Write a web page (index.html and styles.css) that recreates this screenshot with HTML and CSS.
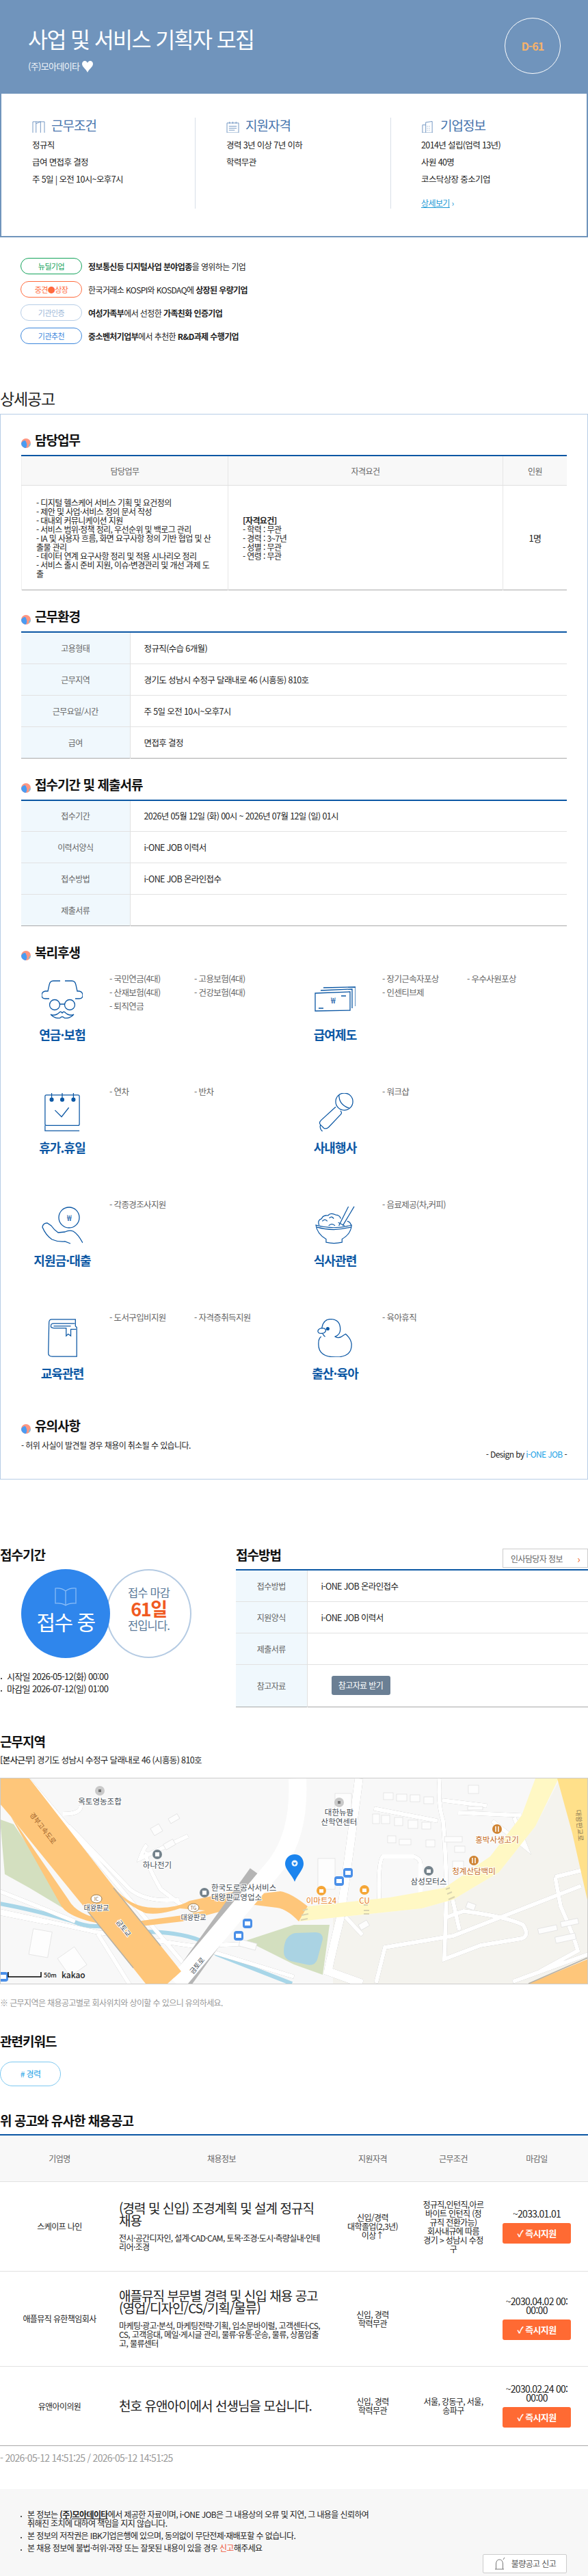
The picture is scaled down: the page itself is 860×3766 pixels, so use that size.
FILE: index.html
```html
<!DOCTYPE html>
<html lang="ko">
  <head>
    <meta charset="UTF-8" />
    <meta name="viewport" content="width=device-width, initial-scale=1.0" />
    <title>사업 및 서비스 기획자 모집</title>
    <link rel="stylesheet" href="styles.css">
  </head>
  <body>
    <svg class="defs" width="0" height="0">
      <symbol id="dot" viewBox="0 0 14 14">
        <circle cx="7" cy="7" r="7" fill="#ff9682" />
        <path d="M0,7 A7,7 0 0 0 7,14 Q10,9 6,3 Q2,3 0,7 Z" fill="#4a9cf2" />
        <path d="M11,12.5 A7,7 0 0 0 14,7 Q11,8 11,12.5 Z" fill="#63cdf0" />
      </symbol>
    </svg>

    <div class="head">
      <div>
        <h1>사업 및 서비스 기획자 모집</h1>
        <p class="company">(주)모아데이타 <svg class="heart" width="16" height="17" viewBox="0 0 16 17"><path d="M8,17 C6,12 0,9 0,4.500 C0,1.500 2,0 4,0 C6,0 7.500,1.500 8,3 C8.500,1.500 10,0 12,0 C14,0 16,1.500 16,4.500 C16,9 10,12 8,17 Z" /></svg></p>
      </div>
      <div class="dday">D-61</div>
    </div>

    <div class="summary">
      <div class="sum-col">
        <h3>
          <svg class="sum-icon" viewBox="0 0 20 18"><path d="M1,18 V1 H19 V18 M6,18 V1 M13,1 V18 M13,1 L6,4" /></svg>
          근무조건
        </h3>
        <p>정규직</p>
        <p>급여 면접후 결정</p>
        <p>주 5일 | 오전 10시~오후7시</p>
      </div>
      <div class="sum-col">
        <h3>
          <svg class="sum-icon" viewBox="0 0 20 18"><path d="M1,18 V3 H19 V18 M1,18 H19 M5,1 V4 M10,1 V4 M15,1 V4 M4,8 H16 M4,11 H16 M4,14 H13" /></svg>
          지원자격
        </h3>
        <p>경력 3년 이상 7년 이하</p>
        <p>학력무관</p>
      </div>
      <div class="sum-col last">
        <h3>
          <svg class="sum-icon" viewBox="0 0 20 18"><path d="M2,18 V6 H7 M7,18 V2 L17,0.5 V18 M1,18 H18 M9,8 H10 M12,8 H13 M9,11 H10 M12,11 H13 M9,14 H10 M12,14 H13" /></svg>
          기업정보
        </h3>
        <p>2014년 설립(업력 13년)</p>
        <p>사원 40명</p>
        <p>코스닥상장 중소기업</p>
        <p class="more"><a href="#">상세보기</a> <span>›</span></p>
      </div>
    </div>

    <ul class="badges">
      <li><span class="badge green">뉴딜기업</span><span><b>정보통신등 디지털사업 분야업종</b>을 영위하는 기업</span></li>
      <li><span class="badge orange">중견●상장</span><span>한국거래소 KOSPI와 KOSDAQ에 <b>상장된 우량기업</b></span></li>
      <li><span class="badge pale">기관인증</span><span><b>여성가족부</b>에서 선정한 <b>가족친화 인증기업</b></span></li>
      <li><span class="badge blue">기관추천</span><span><b>중소벤처기업부</b>에서 추천한 <b>R&amp;D과제 수행기업</b></span></li>
    </ul>

    <h2 class="detail-title">상세공고</h2>
    <div class="detail">
      <h4 class="sec"><svg class="sec-dot"><use href="#dot" /></svg>담당업무</h4>
      <table class="duty">
        <tr><th class="c1">담당업무</th><th class="c2">자격요건</th><th>인원</th></tr>
        <tr>
          <td class="text">- 디지털 헬스케어 서비스 기획 및 요건정의<br>- 제안 및 사업·서비스 정의 문서 작성<br>- 대내외 커뮤니케이션 지원<br>- 서비스 범위·정책 정리, 우선순위 및 백로그 관리<br>- IA 및 사용자 흐름, 화면 요구사항 정의 기반 협업 및 산출물 관리<br>- 데이터 연계 요구사항 정리 및 적용 시나리오 정리<br>- 서비스 출시 준비 지원, 이슈·변경관리 및 개선 과제 도출</td>
          <td class="text"><b>[자격요건]</b><br>- 학력 : 무관<br>- 경력 : 3~7년<br>- 성별 : 무관<br>- 연령 : 무관</td>
          <td class="center">1명</td>
        </tr>
      </table>

      <h4 class="sec"><svg class="sec-dot"><use href="#dot" /></svg>근무환경</h4>
      <table class="info">
        <tr><th>고용형태</th><td>정규직(수습 6개월)</td></tr>
        <tr><th>근무지역</th><td>경기도 성남시 수정구 달래내로 46 (시흥동) 810호</td></tr>
        <tr><th>근무요일/시간</th><td>주 5일 오전 10시~오후7시</td></tr>
        <tr><th>급여</th><td>면접후 결정</td></tr>
      </table>

      <h4 class="sec"><svg class="sec-dot"><use href="#dot" /></svg>접수기간 및 제출서류</h4>
      <table class="info">
        <tr><th>접수기간</th><td>2026년 05월 12일 (화) 00시 ~ 2026년 07월 12일 (일) 01시</td></tr>
        <tr><th>이력서양식</th><td>i-ONE JOB 이력서</td></tr>
        <tr><th>접수방법</th><td>i-ONE JOB 온라인접수</td></tr>
        <tr><th>제출서류</th><td></td></tr>
      </table>

      <h4 class="sec"><svg class="sec-dot"><use href="#dot" /></svg>복리후생</h4>
      <div class="welfare">
        <div class="wf">
          <div class="wf-side">
            <svg class="wf-icon" width="60" height="56" viewBox="0 0 60 56"><path d="M27,1 H17 Q12,1 11,7 L9,16 H5 Q0,17 0,22 Q0,27 5,27 H11 M34,1 H44 Q49,1 50,7 L52,16 H55 Q60,17 60,22 Q60,27 55,27 H49" /><circle cx="19" cy="36" r="7.5" /><circle cx="41" cy="36" r="7.5" /><path d="M26.5,35 H33.5 M13,50 Q20,53 26,47 Q28,45 30,48 Q32,45 34,47 Q40,53 47,50 Q40,57 33,55 Q30,52 27,55 Q20,57 13,50 Z" /></svg>
            <div class="wf-label">연금·보험</div>
          </div>
          <ul class="wf-list"><li>- 국민연금(4대)</li><li>- 고용보험(4대)</li><li>- 산재보험(4대)</li><li>- 건강보험(4대)</li><li>- 퇴직연금</li></ul>
        </div>
        <div class="wf">
          <div class="wf-side">
            <svg class="wf-icon money" width="60" height="56" viewBox="0 0 60 36"><path d="M1,9 L52,7 V34 L1,35 Z M9,5 L55,3 V31 M13,1 L60,0 V28 M6,31 H13 M39,13 H46" /><text x="27" y="24" class="won">₩</text></svg>
            <div class="wf-label">급여제도</div>
          </div>
          <ul class="wf-list"><li>- 장기근속자포상</li><li>- 우수사원포상</li><li>- 인센티브제</li></ul>
        </div>
        <div class="wf">
          <div class="wf-side">
            <svg class="wf-icon" width="60" height="56" viewBox="0 0 54 58"><rect x="1" y="3" width="52" height="46" rx="2" /><path d="M11,0 V9 M27,0 V9 M44,0 V9 M1,49 V57 H53 M16,26 L26,36 L37,22" /><circle class="solid" cx="11" cy="10" r="2.5" /><circle class="solid" cx="27" cy="10" r="2.5" /><circle class="solid" cx="44" cy="10" r="2.5" /></svg>
            <div class="wf-label">휴가.휴일</div>
          </div>
          <ul class="wf-list"><li>- 연차</li><li>- 반차</li></ul>
        </div>
        <div class="wf">
          <div class="wf-side">
            <svg class="wf-icon" width="60" height="56" viewBox="0 0 54 58"><circle cx="41" cy="13" r="13" /><path d="M33,3 Q33,18 49,23" /><path d="M28,21 L6,41 Q2,45 5,48 L10,53 Q13,55 17,52 L36,32 Q38,29 35,27 M5,48 Q3,54 8,58" /></svg>
            <div class="wf-label">사내행사</div>
          </div>
          <ul class="wf-list"><li>- 워크샵</li></ul>
        </div>
        <div class="wf">
          <div class="wf-side">
            <svg class="wf-icon" width="60" height="56" viewBox="0 0 60 54"><circle cx="40" cy="16" r="15" /><text x="40" y="21" class="won">₩</text><path d="M60,53 Q53,40 46,36 Q40,34 34,37 L24,38 Q18,34 14,28 L8,24 Q2,24 1,30 Q6,42 15,48 Q24,52 34,51 L42,54" /></svg>
            <div class="wf-label">지원금·대출</div>
          </div>
          <ul class="wf-list"><li>- 각종경조사지원</li></ul>
        </div>
        <div class="wf">
          <div class="wf-side">
            <svg class="wf-icon" width="60" height="56" viewBox="0 0 62 60"><path d="M1,30 Q29,38 57,30 Q56,44 42,52 V57 Q29,60 17,57 V52 Q3,44 1,30 Z M2,33 Q29,41 56,33" /><path d="M6,30 Q3,22 10,20 Q12,14 20,15 Q24,10 32,14 Q38,14 40,20 M50,24 Q55,25 56,30 M11,24 Q15,19 19,24 M22,19 Q26,15 29,20 M21,31 Q26,26 31,31" /><path d="M37,31 L52,1 M43,31 L61,1 M36,26 L46,31" /></svg>
            <div class="wf-label">식사관련</div>
          </div>
          <ul class="wf-list"><li>- 음료제공(차,커피)</li></ul>
        </div>
        <div class="wf">
          <div class="wf-side">
            <svg class="wf-icon" width="60" height="56" viewBox="0 0 44 58"><path d="M2,6 Q2,1 6,1 H42 V11 L44,13 V57 H7 Q1,57 1,52 Z M43,16 H35 V26 L31,23 L28,26 V14 H9 Q4,14 5,10 Q5,7 9,7 H41 M9,11 H35" /></svg>
            <div class="wf-label">교육관련</div>
          </div>
          <ul class="wf-list"><li>- 도서구입비지원</li><li>- 자격증취득지원</li></ul>
        </div>
        <div class="wf">
          <div class="wf-side">
            <svg class="wf-icon" width="60" height="56" viewBox="0 0 52 58"><path d="M6,14 Q8,1 19,0.5 Q34,1 34,16 Q34,24 26,27 Q30,30 36,27 Q40,24 42,23 Q50,30 51,38 Q52,58 27,58 Q0,58 1,37 Q1,30 5,27" /><path d="M6,14 Q0,15 0,19 Q1,23 7,22 Q12,21 12,17 Q11,14 6,14 Z M7,22 Q9,26 11,27" /><circle class="solid" cx="15" cy="15" r="2" /></svg>
            <div class="wf-label">출산·육아</div>
          </div>
          <ul class="wf-list"><li>- 육아휴직</li></ul>
        </div>
      </div>

      <h4 class="sec notice-head"><svg class="sec-dot"><use href="#dot" /></svg>유의사항</h4>
      <p class="notice">- 허위 사실이 발견될 경우 채용이 취소될 수 있습니다.</p>
      <p class="design">- Design by <span>i-ONE JOB</span> -</p>
    </div>

    <div class="apply">
      <div class="apply-left">
        <h2 class="title">접수기간</h2>
        <div class="circles">
          <div class="ring">
            <span>접수 마감</span>
            <strong>61일</strong>
            <span>전입니다.</span>
          </div>
          <div class="disc">
            <svg class="disc-book" width="32" height="27" viewBox="0 0 32 27"><path d="M16,5 Q10,0 1,1 V23 Q10,22 16,26 Q22,22 31,23 V1 Q22,0 16,5 Z M16,5 V26" /></svg>
            <span>접수 중</span>
          </div>
        </div>
        <ul class="dates">
          <li>시작일 2026-05-12(화) 00:00</li>
          <li>마감일 2026-07-12(일) 01:00</li>
        </ul>
      </div>
      <div class="apply-right">
        <div class="apply-head">
          <h2 class="title">접수방법</h2>
          <a class="hr-btn" href="#">인사담당자 정보 <span>›</span></a>
        </div>
        <table class="info small">
          <tr><th>접수방법</th><td>i-ONE JOB 온라인접수</td></tr>
          <tr><th>지원양식</th><td>i-ONE JOB 이력서</td></tr>
          <tr><th>제출서류</th><td></td></tr>
          <tr class="tall"><th>참고자료</th><td><a class="file-btn" href="#">참고자료 받기</a></td></tr>
        </table>
      </div>
    </div>

    <h2 class="title area-title">근무지역</h2>
    <p class="address"><b>[본사근무]</b> 경기도 성남시 수정구 달래내로 46 (시흥동) 810호</p>

    <div class="map">
      <svg width="860" height="300" viewBox="0 3 860 300">
        <rect x="0" y="0" width="860" height="305" fill="#f8f8f8" />
        <!-- lower right ground -->
        <path d="M487,207 L617,193 663,180 730,140 783,73 817,7 860,3 V303 H487 Z" fill="#f4f3ee" />
        <!-- parks, water -->
        <path d="M0,63 L7,143 43,163 93,193 60,130 20,70 Z" fill="#d3dfbf" />
        <path d="M360,240 L430,217 482,217 472,290 430,275 Z" fill="#d3dfbf" />
        <path d="M415,257 Q415,232 432,229 L462,228 Q472,228 472,238 L464,268 Q460,278 448,275 L425,270 Q415,266 415,257 Z" fill="#aad3e3" />
        <path class="water" d="M0,186 Q50,195 107,212 Q125,220 143,219 Q190,222 213,227 Q265,228 293,240 Q305,250 317,260 L427,303" />
        <!-- plain roads -->
        <g class="road">
          <path d="M0,168 L110,212 M0,197 L143,228 M143,228 L283,248 430,293 M0,200 L70,214 M143,230 L190,305 M283,248 L355,245" />
          <path d="M40,3 L270,275" class="thin" />
          <path d="M92,55 Q120,55 118,42 M275,87 L205,120 Q210,105 215,100 M215,110 Q210,122 235,165 L268,190 M100,72 L190,165 Q215,185 262,180" />
          <path d="M525,3 Q510,120 497,210 Q480,280 480,285 L530,303" class="wide" />
          <path d="M643,3 Q640,40 648,65 Q652,110 653,170 L650,267 L703,247 763,237 Q775,233 765,217 Q740,205 678,197 L650,207 M647,35 L712,43 M547,47 L640,65" />
          <path d="M505,205 L530,232 M550,302 L563,250 663,233 850,160 M662,180 L672,225 M750,300 L860,260 M812,147 L860,135 M812,147 L820,190 Q840,235 845,255 L790,285" />
          <path d="M555,190 Q552,125 560,117 H605 Q615,120 615,128 V172" />
          <path d="M670,53 L762,57 M752,60 L770,105 L720,65" />
        </g>
        <!-- expressway and ramps -->
        <path class="hw" d="M165,160 Q190,192 225,192 Q255,194 277,182 L310,175 L350,167 L375,172 L410,168 Q425,170 450,190 L437,212 Q420,194 405,192 L373,188 L340,193 L267,212 L207,219 L200,212 L267,203 L300,196 L263,193 Q235,203 213,200 Q190,190 173,173 Z" />
        <path class="hw" d="M15,57 L90,190 Q100,205 140,214 L150,217 L135,205 Q110,198 100,180 L23,68 Z" />
        <path class="road-wide-edge" d="M378,143 L263,303" />
        <path class="road-wide" d="M435,3 C438,60 425,100 405,128 L258,303" />
        <!-- buildings -->
        <g class="bld">
          <rect x="222" y="72" width="14" height="12" transform="rotate(-30 229 78)" />
          <rect x="247" y="58" width="15" height="8" transform="rotate(-30 254 62)" />
          <rect x="240" y="95" width="16" height="9" transform="rotate(-30 248 100)" />
          <rect x="45" y="225" width="28" height="38" transform="rotate(10 60 245)" />
          <rect x="90" y="255" width="30" height="32" transform="rotate(-35 105 270)" />
          <rect x="465" y="120" width="25" height="45" />
          <rect x="490" y="25" width="24" height="25" />
          <rect x="561" y="24" width="14" height="10" /><rect x="580" y="26" width="15" height="10" /><rect x="600" y="27" width="14" height="10" /><rect x="620" y="30" width="14" height="10" />
          <rect x="545" y="55" width="10" height="14" /><rect x="558" y="57" width="12" height="12" /><rect x="577" y="60" width="12" height="12" /><rect x="597" y="64" width="14" height="12" /><rect x="617" y="67" width="13" height="10" />
          <rect x="567" y="87" width="12" height="10" /><rect x="584" y="92" width="17" height="8" /><rect x="623" y="93" width="13" height="10" />
          <rect x="650" y="88" width="26" height="8" /><rect x="665" y="102" width="15" height="9" /><rect x="662" y="124" width="16" height="14" />
          <rect x="685" y="13" width="15" height="12" /><rect x="684" y="44" width="22" height="5" />
          <rect x="682" y="185" width="13" height="9" transform="rotate(20 688 190)" />
          <rect x="525" y="213" width="14" height="9" transform="rotate(-30 532 217)" />
          <rect x="787" y="220" width="28" height="8" transform="rotate(-12 800 224)" /><rect x="820" y="210" width="26" height="8" transform="rotate(-12 833 214)" /><rect x="812" y="232" width="30" height="9" transform="rotate(-12 827 236)" />
          <rect x="350" y="241" width="25" height="10" transform="rotate(15 362 246)" />
        </g>
        <path class="hw" d="M0,3 H43 L165,160 L265,285 L245,303 H213 L128,197 L23,68 L17,60 L0,40 Z" />
        <path class="hw-edge" d="M166,163 L235,248 M128,197 L195,280" />
        <path class="yw" d="M437,212 L450,190 570,177 650,163 717,117 763,57 783,3 H817 L783,73 730,140 663,180 617,193 Z" />
        <path class="yw2" d="M815,3 H860 V185 L837,83 Z" />
        <path class="hw" d="M773,303 L860,267 V303 Z" />
        <path class="hw-edge" d="M773,303 L860,265" />
        <g class="cross"><path d="M443,196 L450,194 M441,203 L451,201 M440,210 L450,208 M532,188 H538 M532,196 H540 M532,201 H540 M652,165 L658,163 M654,172 L661,169 M656,180 L665,176" /></g>
        <!-- labels -->
        <circle cx="146" cy="21" r="7" fill="#c9c9c9" /><rect x="144" y="19" width="4" height="4" fill="#777" />
        <text class="lb" x="146" y="41">옥토영농조합</text>
        <circle cx="230" cy="114" r="7" fill="#75838c" /><rect x="227" y="111" width="6" height="6" fill="#fff" />
        <text class="lb" x="230" y="134">하나전기</text>
        <circle cx="299" cy="170" r="7" fill="#75838c" /><rect x="296" y="167" width="6" height="6" fill="#fff" />
        <text class="lb start" x="309" y="167">한국도로공사서비스</text>
        <text class="lb start" x="309" y="181">대왕판교영업소</text>
        <ellipse cx="141" cy="179" rx="8" ry="6" fill="#fff" stroke="#9b7c50" /><text class="lb tiny" x="141" y="182">IC</text>
        <text class="lb sm" x="141" y="196">대왕판교</text>
        <ellipse cx="283" cy="192" rx="8" ry="6" fill="#fff" stroke="#9b7c50" /><text class="lb tiny" x="283" y="195">TG</text>
        <text class="lb sm" x="283" y="210">대왕판교</text>
        <text class="lb sm" transform="translate(178,224) rotate(52)" x="0" y="0">금토교</text>
        <text class="lb sm" transform="translate(291,279) rotate(-50)" x="0" y="0">금토로</text>
        <text class="road-name" transform="translate(60,78) rotate(52)" x="0" y="0">경부고속도로</text>
        <text class="road-name pale" transform="translate(844,72) rotate(85)" x="0" y="0">대왕판교로</text>
        <circle cx="496" cy="38" r="7" fill="#c9c9c9" /><rect x="494" y="36" width="4" height="4" fill="#777" />
        <text class="lb" x="496" y="57">대한뉴팜</text><text class="lb" x="496" y="71">산학연센터</text>
        <circle cx="470" cy="167" r="7" fill="#f5a637" /><rect x="467" y="165" width="6" height="5" fill="#fff" />
        <text class="lb oran" x="470" y="186">이마트24</text>
        <circle cx="533" cy="166" r="7" fill="#f5a637" /><rect x="530" y="164" width="6" height="5" fill="#fff" />
        <text class="lb oran" x="533" y="186">CU</text>
        <circle cx="627" cy="138" r="7" fill="#75838c" /><rect x="624" y="136" width="6" height="5" fill="#fff" />
        <text class="lb" x="627" y="158">삼성모터스</text>
        <circle cx="727" cy="77" r="7" fill="#cf8434" /><path d="M725,73 V81 M729,73 V81" stroke="#fff" stroke-width="1.5" />
        <text class="lb brown" x="727" y="97">홍박사생고기</text>
        <circle cx="693" cy="123" r="7" fill="#cf8434" /><path d="M691,119 V127 M695,119 V127" stroke="#fff" stroke-width="1.5" />
        <text class="lb brown" x="693" y="143">청계산담백미</text>
        <g class="bus">
          <rect x="355" y="208" width="14" height="14" rx="4" /><rect x="342" y="226" width="14" height="14" rx="4" /><rect x="502" y="134" width="14" height="14" rx="4" /><rect x="489" y="146" width="14" height="14" rx="4" /><rect x="-2" y="286" width="14" height="14" rx="4" />
        </g>
        <g class="bus-in">
          <rect x="358" y="212" width="8" height="6" /><rect x="345" y="230" width="8" height="6" /><rect x="505" y="138" width="8" height="6" /><rect x="492" y="150" width="8" height="6" /><rect x="1" y="290" width="8" height="6" />
        </g>
        <path d="M431,114 C423,114 417,120 417,128 C417,136 427,144 431,154 C435,144 444,136 444,128 C444,120 439,114 431,114 Z" fill="#1b84ee" />
        <circle cx="431" cy="127" r="4.5" fill="#e9f3fd" /><path d="M428.5,126 H433.5 L431,130 Z" fill="#1b84ee" />
        <path d="M12,286 V293 H60 V286" fill="none" stroke="#000" stroke-width="1.5" />
        <text class="scale" x="64" y="294">50m</text>
        <text class="kakao" x="90" y="295">kakao</text>
      </svg>
    </div>
    <p class="map-note">※ 근무지역은 채용공고별로 회사위치와 상이할 수 있으니 유의하세요.</p>

    <h2 class="title key-title">관련키워드</h2>
    <a class="pill" href="#"># 경력</a>

    <h2 class="title like-title">위 공고와 유사한 채용공고</h2>
    <table class="jobs">
      <tr class="jobs-head"><th class="j1">기업명</th><th class="j2">채용정보</th><th class="j3">지원자격</th><th class="j4">근무조건</th><th class="j5">마감일</th></tr>
      <tr class="r1">
        <td>스케이프 나인</td>
        <td class="job-main"><div class="job-title">(경력 및 신입) 조경계획 및 설계 정규직 채용</div><div class="job-sub">전시·공간디자인, 설계·CAD·CAM, 토목·조경·도시·측량실내·인테리어·조경</div></td>
        <td>신입/경력<br>대학졸업(2,3년)<br>이상↑</td>
        <td class="cond">정규직,인턴직,아르바이트 인턴직 (정규직 전환가능)<br>회사내규에 따름<br>경기 &gt; 성남시 수정구</td>
        <td><div class="due">~2033.01.01</div><a class="go" href="#">✓ 즉시지원</a></td>
      </tr>
      <tr class="r2">
        <td>애플뮤직 유한책임회사</td>
        <td class="job-main"><div class="job-title">애플뮤직 부문별 경력 및 신입 채용 공고 (영업/디자인/CS/기획/물류)</div><div class="job-sub">마케팅·광고·분석, 마케팅전략·기획, 입소문바이럴, 고객센터·CS, CS, 고객응대, 메일·게시글 관리, 물류·유통·운송, 물류, 상품입출고, 물류센터</div></td>
        <td>신입, 경력<br>학력무관</td>
        <td class="cond"></td>
        <td><div class="due">~2030.04.02 00:00:00</div><a class="go" href="#">✓ 즉시지원</a></td>
      </tr>
      <tr class="r3">
        <td>유앤아이의원</td>
        <td class="job-main"><div class="job-title">천호 유앤아이에서 선생님을 모십니다.</div></td>
        <td>신입, 경력<br>학력무관</td>
        <td class="cond">서울, 강동구, 서울, 송파구</td>
        <td><div class="due">~2030.02.24 00:00:00</div><a class="go" href="#">✓ 즉시지원</a></td>
      </tr>
    </table>
    <p class="stamp">- 2026-05-12 14:51:25 / 2026-05-12 14:51:25</p>

    <div class="footer">
      <ul>
        <li>본 정보는 <b><u>(주)모아데이타</u></b>에서 제공한 자료이며, i-ONE JOB은 그 내용상의 오류 및 지연, 그 내용을 신뢰하여 취해진 조치에 대하여 책임을 지지 않습니다.</li>
        <li>본 정보의 저작권은 IBK기업은행에 있으며, 동의없이 무단전제·재배포할 수 없습니다.</li>
        <li>본 채용 정보에 불법·허위·과장 또는 잘못된 내용이 있을 경우 <span class="red">신고</span>해주세요</li>
      </ul>
      <a class="report" href="#">
        <svg width="18" height="18" viewBox="0 0 18 18"><path d="M2,17 H15 M3.5,17 V9 Q4,3 8.5,3 Q13,3 13.5,9 V17 M14,3 L16,0" /></svg>
        불량공고 신고
      </a>
    </div>
  </body>
</html>
```

FILE: styles.css
```css
* {
  letter-spacing: -0.05em;
}
body {
  font-family: "Noto Sans CJK KR", "Noto Sans", sans-serif;
  font-size: 12px;
  color: #222;
  margin: 0;
  padding: 0;
  background-color: #fff;
}
h1,
h2,
h3,
h4,
p,
ul {
  margin: 0;
  padding: 0;
}
ul {
  list-style: none;
}
a {
  color: inherit;
  text-decoration: none;
}
table {
  border-collapse: collapse;
  table-layout: fixed;
}
.defs {
  position: absolute;
}

/* top */
.head {
  height: 137px;
  box-sizing: border-box;
  background-color: #7094bc;
  padding: 26px 40px 0 41px;
  display: flex;
  justify-content: space-between;
  align-items: flex-start;
  color: #fff;
}
.head h1 {
  font-size: 31.5px;
  font-weight: 400;
  line-height: 60px;
}
.company {
  font-size: 13px;
  line-height: 24px;
  margin-top: -1px;
  color: #f0f4f9;
  display: flex;
  align-items: center;
  gap: 4px;
}
.heart {
  fill: #fff;
}
.dday {
  width: 82px;
  height: 82px;
  box-sizing: border-box;
  border: 1px solid #fff;
  border-radius: 50%;
  display: flex;
  align-items: center;
  justify-content: center;
  font-size: 16px;
  font-weight: 700;
  color: #f6b26b;
}
.summary {
  height: 210px;
  box-sizing: border-box;
  border: 2px solid #7094bc;
  border-top: 0;
  padding: 35px 0 0 0;
  display: flex;
}
.sum-col {
  height: 133px;
  border-right: 1px solid #d8dfe8;
  box-sizing: border-box;
  padding-left: 45px;
  width: 285px;
  font-size: 12.5px;
}
.sum-col + .sum-col {
  width: 287px;
}
.sum-col.last {
  border-right: 0;
  padding-left: 44px;
}
.sum-col h3 {
  font-size: 19px;
  font-weight: 400;
  color: #4674ad;
  line-height: 22px;
  display: flex;
  align-items: center;
  gap: 9px;
  margin-bottom: 5px;
}
.sum-icon {
  width: 19px;
  height: 17px;
  fill: none;
  stroke: #6d93c0;
  stroke-width: 1;
  margin-top: 4px;
}
.sum-col p {
  line-height: 25px;
}
.sum-col .more {
  margin-top: 12px;
  line-height: 22px;
  color: #1a9ad6;
  font-size: 12px;
}
.more a {
  text-decoration: underline;
}

.badges {
  margin-top: 30px;
  padding-left: 30px;
}
.badges li {
  display: flex;
  align-items: center;
  gap: 9px;
  height: 24px;
  margin-bottom: 10px;
}
.badges li:last-child {
  margin-bottom: 0;
}
.badge {
  width: 90px;
  height: 24px;
  box-sizing: border-box;
  border: 1px solid;
  border-radius: 12px;
  font-size: 11px;
  line-height: 22px;
  text-align: center;
}
.badge.green {
  color: #12a25a;
  border-color: #12a25a;
}
.badge.orange {
  color: #ff6b3d;
  border-color: #ff6b3d;
}
.badge.pale {
  color: #9db8d8;
  border-color: #b7cde6;
}
.badge.blue {
  color: #3b86dc;
  border-color: #3b86dc;
}

/* detail box */
.detail-title {
  font-size: 23px;
  font-weight: 400;
  line-height: 30px;
  margin-top: 64px;
  margin-bottom: 8px;
}
.detail {
  border: 1px solid #b7cde6;
  height: 1558px;
  box-sizing: border-box;
  padding: 25px 30px 0 30px;
}
.sec {
  display: flex;
  align-items: flex-end;
  gap: 6px;
  font-size: 19px;
  font-weight: 700;
  line-height: 24px;
  height: 24px;
  margin: 26px 0 10px 0;
  color: #111;
}
.detail > .sec:first-child {
  margin-top: 0;
}
.sec-dot {
  width: 14px;
  height: 14px;
}
.duty,
.info {
  width: 798px;
  border-top: 2px solid #0b57a4;
  border-bottom: 1px solid #a9a9a9;
}
.duty th {
  height: 40px;
  background-color: #f8f8f8;
  font-weight: 400;
  color: #666;
  border-bottom: 1px solid #e0e0e0;
  border-right: 1px solid #e6e6e6;
}
.duty th:last-child,
.duty td:last-child {
  border-right: 0;
}
.duty .c1 {
  width: 299px;
}
.duty .c2 {
  width: 399px;
}
.duty td {
  height: 150px;
  border-right: 1px solid #e6e6e6;
}
.duty td:first-child,
.duty th:first-child {
  border-left: 1px solid #eee;
}
.duty .text {
  padding: 0 20px 0 21px;
  line-height: 13px;
  vertical-align: middle;
}
.duty .center {
  font-size: 13px;
  text-align: center;
}
.info th {
  width: 159px;
  box-sizing: border-box;
  height: 46px;
  background-color: #f0f8fd;
  border-right: 1px solid #e0e0e0;
  border-bottom: 1px solid #e2e2e2;
  color: #666;
  font-weight: 400;
}
.info td {
  padding-left: 20px;
  font-size: 12.5px;
  border-bottom: 1px solid #e2e2e2;
}
.info tr:last-child th,
.info tr:last-child td {
  border-bottom: 0;
}

/* welfare */
.welfare {
  display: grid;
  grid-template-columns: 399px 399px;
  row-gap: 55px;
  padding-top: 7px;
}
.wf {
  display: flex;
  height: 110px;
}
.wf-side {
  width: 120px;
  margin-right: 9px;
  text-align: center;
  padding-top: 12px;
  box-sizing: border-box;
}
.wf-icon {
  display: block;
  margin: 0 auto;
  fill: none;
  stroke: #0b57a4;
  stroke-width: 1.3;
}
.wf-icon .solid {
  fill: #0b57a4;
}
.wf-icon .won {
  font-size: 12px;
  text-anchor: middle;
  fill: #0b57a4;
  stroke: none;
}
.wf-label {
  font-size: 18px;
  font-weight: 700;
  color: #0b57a4;
  line-height: 24px;
  margin-top: 11px;
}
.wf-list {
  display: grid;
  grid-template-columns: 124px 124px;
  grid-auto-rows: 20px;
  align-content: start;
  color: #666;
  font-size: 12.5px;
  line-height: 20px;
}
.notice-head {
  margin-top: 46px;
}
.notice {
  margin-top: -2px;
  line-height: 18px;
}
.design {
  text-align: right;
  line-height: 18px;
  margin-top: -5px;
}
.design span {
  color: #1aa2e6;
}

/* apply */
.title {
  font-size: 19px;
  font-weight: 700;
  line-height: 30px;
  color: #111;
}
.apply {
  display: flex;
  margin-top: 95px;
}
.apply-left {
  width: 345px;
}
.apply-right {
  width: 515px;
}
.apply-left .title {
  margin-bottom: 6px;
}
.circles {
  position: relative;
  width: 345px;
  height: 130px;
}
.disc {
  position: absolute;
  left: 31px;
  top: 0;
  width: 130px;
  height: 130px;
  border-radius: 50%;
  background-color: #2f86ec;
  color: #fff;
  text-align: center;
  font-size: 30px;
  line-height: 40px;
}
.disc span {
  display: block;
  margin-top: 2px;
}
.disc-book {
  display: block;
  margin: 27px auto 0 auto;
  fill: none;
  stroke: #8fc0f7;
  stroke-width: 1.2;
}
.ring {
  position: absolute;
  left: 155px;
  top: 0;
  width: 125px;
  height: 130px;
  box-sizing: border-box;
  border: 2px solid #b5cbe3;
  border-radius: 50%;
  padding-bottom: 14px;
  display: flex;
  flex-direction: column;
  align-items: center;
  justify-content: center;
  font-size: 16.5px;
  line-height: 24px;
  color: #5b7a9a;
}
.ring strong {
  font-size: 27px;
  line-height: 24px;
  color: #f05a22;
}
.dates {
  margin-top: 18px;
  font-size: 13px;
}
.dates li {
  line-height: 18px;
  padding-left: 10px;
  position: relative;
}
.dates li::before {
  content: "";
  position: absolute;
  left: 1px;
  top: 11px;
  width: 2px;
  height: 2px;
  background-color: #555;
}
.apply-head {
  display: flex;
  justify-content: space-between;
  height: 36px;
}
.hr-btn {
  align-self: flex-end;
  margin-bottom: 2px;
  width: 125px;
  height: 28px;
  box-sizing: border-box;
  border: 1px solid #ccc;
  padding: 0 11px;
  display: flex;
  justify-content: space-between;
  align-items: center;
  color: #666;
}
.hr-btn span {
  color: #f0682f;
  font-size: 15px;
}
.info.small {
  width: 515px;
}
.info.small th {
  width: 104px;
}
.tall th {
  height: 62px;
}
.file-btn {
  display: inline-block;
  margin-left: 15px;
  width: 86px;
  height: 28px;
  font-size: 12px;
  line-height: 28px;
  text-align: center;
  background-color: #6b7f94;
  color: #fff;
  border-radius: 3px;
}
.area-title {
  margin-top: 35px;
}
.address {
  margin-top: 3px;
  font-size: 12.5px;
  line-height: 18px;
}
.address b {
  font-weight: 500;
}

/* map */
.map {
  margin-top: 17px;
  width: 860px;
  height: 302px;
  box-sizing: border-box;
  border: 1px solid #ccc;
  overflow: hidden;
}
.map svg {
  display: block;
  margin-left: -1px;
}
.map text {
  letter-spacing: 0;
}
.water {
  fill: none;
  stroke: #a8d6e8;
  stroke-width: 6;
}
.road path {
  fill: none;
  stroke: #fff;
  stroke-width: 6;
}
.road {
  filter: drop-shadow(0 0 0.6px #aaa);
}
.road path.wide {
  stroke-width: 12;
}
.road-wide {
  fill: none;
  stroke: #fff;
  stroke-width: 26;
}
.road-wide-edge {
  fill: none;
  stroke: #b5b5b5;
  stroke-width: 30;
}
.bld rect {
  fill: #fdfdfd;
  stroke: #dedede;
  stroke-width: 0.7;
}
.hw {
  fill: #fec67a;
}
.hw-edge {
  fill: none;
  stroke: #b5b0a5;
  stroke-width: 1.5;
}
.yw {
  fill: #fff8c4;
}
.yw2 {
  fill: #ffe08a;
}
.cross path {
  fill: none;
  stroke: #d9d3b0;
  stroke-width: 2;
}
.lb {
  font-size: 11.5px;
  fill: #3f4a52;
  text-anchor: middle;
  stroke: #fff;
  stroke-width: 2px;
  paint-order: stroke;
}
.lb.start {
  text-anchor: start;
}
.lb.sm {
  font-size: 10px;
}
.lb.tiny {
  font-size: 7px;
  stroke: none;
  fill: #8a6a3c;
}
.lb.oran {
  fill: #e67d22;
}
.lb.brown {
  fill: #c4691a;
}
.road-name {
  font-size: 10px;
  fill: #a0622a;
  text-anchor: middle;
}
.road-name.pale {
  fill: #8d7a55;
}
.bus rect {
  fill: #4a8fe8;
}
.bus-in rect {
  fill: #fff;
}
.scale {
  font-size: 9px;
  font-weight: 500;
  fill: #222;
}
.kakao {
  font-size: 12px;
  font-weight: 500;
  fill: #222;
}
.map-note {
  margin-top: 18px;
  line-height: 18px;
  color: #999;
}
.key-title {
  margin-top: 32px;
}
.pill {
  display: block;
  width: 89px;
  height: 36px;
  box-sizing: border-box;
  margin-top: 15px;
  border: 1px solid #7cc8f0;
  border-radius: 18px;
  text-align: center;
  line-height: 33px;
  color: #1aa2e6;
}
.like-title {
  margin-top: 35px;
}

/* similar jobs */
.jobs {
  width: 860px;
  margin-top: 5px;
  border-top: 2px solid #0b57a4;
  border-bottom: 1px solid #a9a9a9;
  text-align: center;
}
.jobs td {
  padding: 0;
  line-height: 13px;
  border-bottom: 1px solid #e2e2e2;
}
.jobs tr:last-child td {
  border-bottom: 0;
}
.jobs-head th {
  height: 65px;
  background-color: #f8f8f8;
  border-bottom: 1px solid #e2e2e2;
  font-weight: 400;
  color: #666;
}
.j1 {
  width: 172px;
}
.j2 {
  width: 298px;
}
.j3 {
  width: 140px;
}
.j4 {
  width: 92px;
}
.r1 td {
  height: 130px;
}
.r2 td {
  height: 138px;
}
.r3 td {
  height: 115px;
}
.jobs .cond {
  padding: 0 1px;
  word-break: break-all;
}
.jobs .job-main {
  text-align: left;
}
.job-title {
  font-size: 19px;
  line-height: 18px;
  color: #222;
}
.job-sub {
  margin-top: 10px;
  line-height: 13px;
  word-break: break-all;
}
.due {
  width: 96px;
  margin: 0 auto;
  font-size: 14px;
  line-height: 13px;
  word-break: break-all;
}
.go {
  display: block;
  width: 100px;
  height: 30px;
  line-height: 30px;
  margin: 7px auto 0 auto;
  border-radius: 3px;
  background-color: #ff6a33;
  color: #fff;
  font-weight: 700;
  font-size: 13px;
}
.stamp {
  margin-top: 8px;
  line-height: 18px;
  color: #999;
  font-size: 14px;
}

.footer {
  margin-top: 37px;
  height: 127px;
  box-sizing: border-box;
  background-color: #f7f7f7;
  padding: 30px 31px 0 40px;
}
.footer ul {
  width: 510px;
}
.footer li {
  position: relative;
  line-height: 13px;
  margin-bottom: 5px;
}
.footer li::before {
  content: "";
  position: absolute;
  left: -10px;
  top: 9px;
  width: 2px;
  height: 2px;
  background-color: #555;
}
.red {
  color: #f0563a;
}
.report {
  margin-left: auto;
  width: 123px;
  height: 28px;
  box-sizing: border-box;
  border: 1px solid #ccc;
  border-radius: 2px;
  background-color: #fff;
  display: flex;
  align-items: center;
  justify-content: center;
  gap: 8px;
  margin-top: -2px;
  color: #555;
}
.report svg {
  fill: none;
  stroke: #777;
}
```
